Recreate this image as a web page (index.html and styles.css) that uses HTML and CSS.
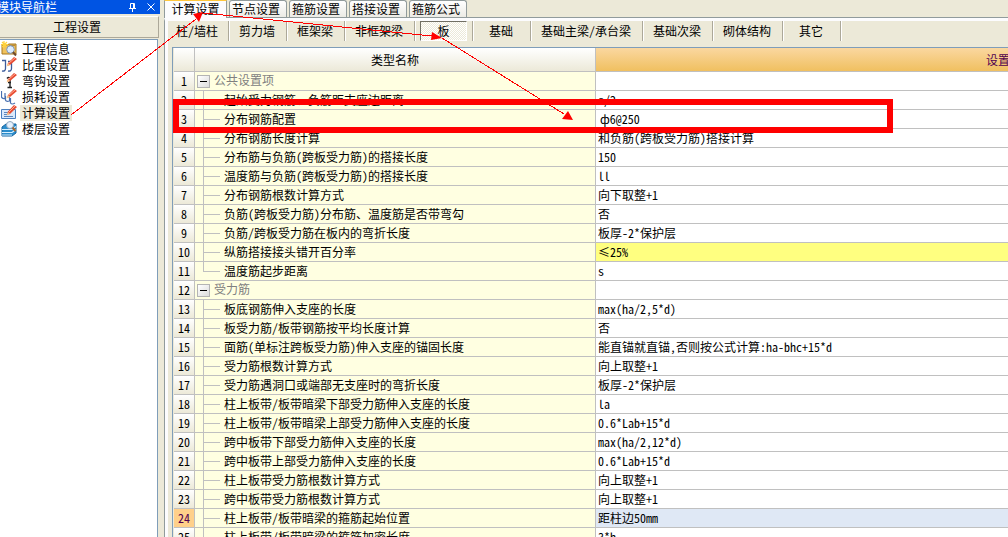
FILE: index.html
```html
<!DOCTYPE html>
<html lang="zh-CN">
<head>
<meta charset="utf-8">
<title>工程设置</title>
<link rel="stylesheet" href="styles.css">
</head>
<body>
<div class="app">
  <aside class="sidebar">
    <header class="dock-title">
      <span class="dock-name">模块导航栏</span>
      <button class="dock-btn" type="button" aria-label="固定"><svg width="9" height="9" viewBox="0 0 9 9"><path d="M1 5.500H8M2.500 0.500H6.500V5.500H2.500ZM5.500 0.500V5.500M4.500 5.500V9" fill="none" stroke="#fff"/></svg></button>
      <button class="dock-btn" type="button" aria-label="关闭"><svg width="8" height="8" viewBox="0 0 8 8"><path d="M0.500 0.500 7.500 7.500M7.500 0.500 0.500 7.500" fill="none" stroke="#fff"/></svg></button>
    </header>
    <button class="section" type="button">工程设置</button>
    <nav class="nav">
      <button class="nav-item" type="button">
        <svg width="16" height="16" viewBox="0 0 16 16"><path d="M1 4H6L8 3H15V13H1Z" fill="#f0c25c" stroke="#a87820"/><path d="M3 0V7M0 3.500H7M1 1 6 6M6 1 1 6" stroke="#ffd23c" stroke-width="1.200"/><path d="M8 3.500H14V5H8Z" fill="#b98a35"/><circle cx="9.500" cy="8.500" r="3.800" fill="#dcecff" stroke="#7a93b8"/><path d="M12 11 15 14.500" stroke="#704a2a" stroke-width="2"/></svg>
        <span class="nav-text">工程信息</span></button>
      <button class="nav-item" type="button">
        <svg width="16" height="16" viewBox="0 0 16 16"><path d="M1 3.500H4.500V11.500Q4.500 14.500 1 14M7 4.500H10.500V11.500Q10.500 14.500 7 14" fill="none" stroke="#3c5c9c" stroke-width="1.300"/><path d="M6 9 7 6 13 0 16 2 9 8Z" fill="#e84b32"/><path d="M8 6 14 1" stroke="#ffab92"/><path d="M5.500 9.500 7 6 9 8Z" fill="#f5c58a"/></svg>
        <span class="nav-text">比重设置</span></button>
      <button class="nav-item" type="button">
        <svg width="16" height="16" viewBox="0 0 16 16"><path d="M6 5.500Q8 3 9 6V14M6.500 14.500H11M7 9.500H10" fill="none" stroke="#222" stroke-width="1.400"/><path d="M6 9 7 6 13 0 16 2 9 8Z" fill="#e84b32"/><path d="M8 6 14 1" stroke="#ffab92"/><path d="M5.500 9.500 7 6 9 8Z" fill="#f5c58a"/></svg>
        <span class="nav-text">弯钩设置</span></button>
      <button class="nav-item" type="button">
        <svg width="16" height="16" viewBox="0 0 16 16"><path d="M0.500 2V8Q1 10 4 9.500V4M4.500 7V11Q5 13 8.500 12V8M9.500 9V14Q11 16 14 14" fill="none" stroke="#4970b0" stroke-width="1.200"/><path d="M6 9 7 6 13 0 16 2 9 8Z" fill="#e84b32"/><path d="M8 6 14 1" stroke="#ffab92"/><path d="M5.500 9.500 7 6 9 8Z" fill="#f5c58a"/></svg>
        <span class="nav-text">损耗设置</span></button>
      <button class="nav-item selected" type="button" aria-current="page">
        <svg width="16" height="16" viewBox="0 0 16 16"><path d="M0.500 4.500H14.500V13.500H0.500Z" fill="#d9e9fc" stroke="#4a7fc0"/><path d="M3 7.500H7M3 9.500H7M3 11.500H12" stroke="#5a86bc"/><path d="M6 10 7 6.500 13 0 16 2 9 9Z" fill="#e84b32"/><path d="M8 7 14 1" stroke="#ffab92"/><path d="M5.500 10.500 7 7 9 9Z" fill="#f5c58a"/></svg>
        <span class="nav-text">计算设置</span></button>
      <button class="nav-item" type="button">
        <svg width="16" height="16" viewBox="0 0 16 16"><path d="M1 6 5 3H15V12L11 15H1Z" fill="#2b8dcc" stroke="#1765a0"/><path d="M1 8.500H11L15 5.500M1 11.500H11L15 8.500M1 14H11" fill="none" stroke="#d8f0ff" stroke-width="1.200"/><circle cx="9" cy="4" r="3.500" fill="#e6f1fc" stroke="#8ba4be"/><path d="M11.500 6.500 14.500 10" stroke="#a4642c" stroke-width="2"/></svg>
        <span class="nav-text">楼层设置</span></button>
    </nav>
  </aside>

  <main class="main">
    <nav class="tabs">
      <button class="tab active" type="button">计算设置</button>
      <button class="tab" type="button">节点设置</button>
      <button class="tab" type="button">箍筋设置</button>
      <button class="tab" type="button">搭接设置</button>
      <button class="tab" type="button">箍筋公式</button>
    </nav>
    <section class="page">
      <nav class="kinds">
        <button class="kind" type="button">柱/墙柱</button>
        <button class="kind" type="button">剪力墙</button>
        <button class="kind" type="button">框架梁</button>
        <button class="kind" type="button">非框架梁</button>
        <button class="kind" type="button" aria-pressed="true"><span class="pressed">板</span></button>
        <button class="kind" type="button">基础</button>
        <button class="kind" type="button">基础主梁/承台梁</button>
        <button class="kind" type="button">基础次梁</button>
        <button class="kind" type="button">砌体结构</button>
        <button class="kind" type="button">其它</button>
      </nav>
      <div class="grid-wrap">
        <table class="grid">
          <colgroup><col class="c-num"><col class="c-name"><col class="c-value"></colgroup>
          <thead><tr><th></th><th>类型名称</th><th class="h-value">设置</th></tr></thead>
          <tbody>
            <tr><th>1</th><td class="group"><button class="toggle" type="button" aria-label="折叠公共设置项"></button>公共设置项</td><td></td></tr>
            <tr><th>2</th><td class="leaf">起始受力钢筋、负筋距支座边距离</td><td>s/2</td></tr>
            <tr><th>3</th><td class="leaf">分布钢筋配置</td><td class="rebar">ф6@250</td></tr>
            <tr><th>4</th><td class="leaf">分布钢筋长度计算</td><td>和负筋(跨板受力筋)搭接计算</td></tr>
            <tr><th>5</th><td class="leaf">分布筋与负筋(跨板受力筋)的搭接长度</td><td>150</td></tr>
            <tr><th>6</th><td class="leaf">温度筋与负筋(跨板受力筋)的搭接长度</td><td>ll</td></tr>
            <tr><th>7</th><td class="leaf">分布钢筋根数计算方式</td><td>向下取整+1</td></tr>
            <tr><th>8</th><td class="leaf">负筋(跨板受力筋)分布筋、温度筋是否带弯勾</td><td>否</td></tr>
            <tr><th>9</th><td class="leaf">负筋/跨板受力筋在板内的弯折长度</td><td>板厚-2*保护层</td></tr>
            <tr><th>10</th><td class="leaf">纵筋搭接接头错开百分率</td><td class="changed">≤25%</td></tr>
            <tr><th>11</th><td class="leaf last">温度筋起步距离</td><td>s</td></tr>
            <tr><th>12</th><td class="group"><button class="toggle" type="button" aria-label="折叠受力筋"></button>受力筋</td><td></td></tr>
            <tr><th>13</th><td class="leaf">板底钢筋伸入支座的长度</td><td>max(ha/2,5*d)</td></tr>
            <tr><th>14</th><td class="leaf">板受力筋/板带钢筋按平均长度计算</td><td>否</td></tr>
            <tr><th>15</th><td class="leaf">面筋(单标注跨板受力筋)伸入支座的锚固长度</td><td>能直锚就直锚,否则按公式计算:ha-bhc+15*d</td></tr>
            <tr><th>16</th><td class="leaf">受力筋根数计算方式</td><td>向上取整+1</td></tr>
            <tr><th>17</th><td class="leaf">受力筋遇洞口或端部无支座时的弯折长度</td><td>板厚-2*保护层</td></tr>
            <tr><th>18</th><td class="leaf">柱上板带/板带暗梁下部受力筋伸入支座的长度</td><td>la</td></tr>
            <tr><th>19</th><td class="leaf">柱上板带/板带暗梁上部受力筋伸入支座的长度</td><td>0.6*Lab+15*d</td></tr>
            <tr><th>20</th><td class="leaf">跨中板带下部受力筋伸入支座的长度</td><td>max(ha/2,12*d)</td></tr>
            <tr><th>21</th><td class="leaf">跨中板带上部受力筋伸入支座的长度</td><td>0.6*Lab+15*d</td></tr>
            <tr><th>22</th><td class="leaf">柱上板带受力筋根数计算方式</td><td>向上取整+1</td></tr>
            <tr><th>23</th><td class="leaf">跨中板带受力筋根数计算方式</td><td>向上取整+1</td></tr>
            <tr class="current"><th>24</th><td class="leaf">柱上板带/板带暗梁的箍筋起始位置</td><td>距柱边50mm</td></tr>
            <tr><th>25</th><td class="leaf">柱上板带/板带暗梁的箍筋加密长度</td><td>3*h</td></tr>
          </tbody>
        </table>
      </div>
    </section>
  </main>
</div>
<svg class="marks" aria-hidden="true">
  <rect x="176" y="102" width="714" height="28" fill="none" stroke="#f00" stroke-width="6"/>
  <path d="M71 115 196 19M203 13 432 36M442 38 564 114" fill="none" stroke="#f00" shape-rendering="crispEdges"/>
  <path d="M203 12 193 14 199 22ZM442 38 432 32 431 40ZM573 120 568 111 562 119Z" fill="#f00"/>
</svg>
</body>
</html>
```
FILE: styles.css
```css
* { box-sizing: border-box; }

body {
  margin: 0;
  background: #ece9d8;
  color: #000;
  font: 12px/16px "Noto Sans CJK SC", sans-serif;
  font-feature-settings: "hwid";
}

button {
  margin: 0;
  padding: 0;
  border: 0;
  background: none;
  color: inherit;
  font: inherit;
  font-feature-settings: inherit;
  white-space: nowrap;
}

svg { display: block; flex: none; }

.app { display: flex; height: 100vh; overflow: hidden; }

/* Left dock */
.sidebar {
  display: flex;
  flex-direction: column;
  flex: none;
  width: 160px;
  margin-right: 4px;
}
.dock-title {
  display: flex;
  align-items: center;
  gap: 10px;
  height: 14px;
  padding-right: 5px;
  background: #0054e3;
  color: #fff;
  overflow: hidden;
}
.dock-name { flex: 1; margin: 0 0 0 -3px; }
.section {
  height: 22px;
  margin: 2px 1px 0 0;
  padding-right: 4px;
  border: 1px solid #aca899;
  border-left: 0;
  border-top-color: #fff;
}
.nav {
  flex: 1;
  margin: 1px 2px 0 0;
  padding-top: 1px;
  border-top: 1px solid #7f9db9;
  border-right: 1px solid #7f9db9;
  background: #fff;
}
.nav-item { display: flex; gap: 3px; padding-left: 1px; height: 16px; }
.nav-text { padding: 0 2px; }
.selected .nav-text { background: #ece9d8; }

/* Upper tabs */
.main { display: flex; flex-direction: column; flex: 1; min-width: 0; }
.tabs {
  display: flex;
  align-items: flex-end;
  gap: 2px;
  height: 18px;
  border-bottom: 1px solid #919b9c;
}
.tab {
  width: 58px;
  height: 17px;
  padding-right: 4px;
  border: 1px solid #919b9c;
  border-bottom: 0;
  border-radius: 3px 3px 0 0;
  background: linear-gradient(#fff, #ecebe5);
}
.tab.active {
  width: 63px;
  height: 18px;
  margin-bottom: -1px;
  padding: 0 0 3px;
  border-top: 1px solid #ffc73c;
  border-radius: 0;
  background: #fcfcfe;
}

/* Page */
.page {
  display: flex;
  flex-direction: column;
  flex: 1;
  min-height: 0;
  padding-left: 4px;
  border-left: 1px solid #919b9c;
  border-top: 3px solid #fcfcfe;
  box-shadow: inset 3px 0 #fcfcfe;
}
.kinds { display: flex; flex: none; height: 26px; }
.kind {
  flex: none;
  min-width: 58px;
  height: 20px;
  padding: 0 11px 0 10px;
  border-right: 1px solid #aca899;
  box-shadow: 1px 0 #fff;
}
.kind:first-child { padding: 0 10px 0 7px; }
.kind[aria-pressed] { padding: 0 5px; }
.pressed {
  display: block;
  height: 20px;
  border: 1px solid #716f64;
  border-right-color: #fff;
  border-bottom-color: #fff;
  background: repeating-conic-gradient(#fff 0 25%, #ece9d8 0 50%) 0 0 / 2px 2px;
  line-height: 18px;
}

/* Settings grid */
.grid-wrap {
  flex: 1;
  min-height: 0;
  margin-left: 3px;
  overflow: hidden;
  border-top: 1px solid #7f9db9;
  border-left: 1px solid #7f9db9;
}
.grid {
  width: 100%;
  min-width: 1227px;
  margin-left: 1px;
  table-layout: fixed;
  border-collapse: separate;
  border-spacing: 0;
  background: #fff;
}
.c-num { width: 21px; }
.c-name { width: 401px; }
.grid th, .grid td {
  height: 19px;
  padding: 0 0 0 2px;
  border-right: 1px solid #c0c0c0;
  border-bottom: 1px solid #c0c0c0;
  font-weight: 400;
  line-height: 16px;
  text-align: left;
  white-space: nowrap;
}
.grid th {
  padding: 0;
  background: linear-gradient(#fff, #ece9d8);
  text-align: center;
}
.grid thead th { height: 24px; }
.grid thead .h-value { background: linear-gradient(#fad7a0, #f0c060); color: #500050; }
.grid .rebar { padding-left: 4px; }
.grid .changed { background: #ffff80; }
.grid .current th { background: #ffd08a; color: #500050; }
.grid .current td { background-color: #dfe8f5; }
.grid .group, .grid .leaf, .grid .current .leaf { background-color: #ffffe1; }
.grid .group { color: #808080; }

/* Tree connectors */
.grid .leaf {
  padding-left: 29px;
  background-image: linear-gradient(#c0c0c0, #c0c0c0), linear-gradient(#c0c0c0, #c0c0c0);
  background-repeat: no-repeat;
  background-position: 8px 0, 8px 9px;
  background-size: 1px 100%, 17px 1px;
}
.grid .leaf.last { background-size: 1px 9px, 17px 1px; }
.toggle {
  width: 13px;
  height: 13px;
  margin: 0 4px 2px 0;
  border: 1px solid #b4b4b4;
  background: linear-gradient(#000, #000) center / 7px 1px no-repeat, linear-gradient(135deg, #fff, #dcdcdc);
  vertical-align: middle;
}

/* Annotation layer */
.marks {
  position: absolute;
  inset: 0;
  width: 100%;
  height: 100%;
  pointer-events: none;
}
```
